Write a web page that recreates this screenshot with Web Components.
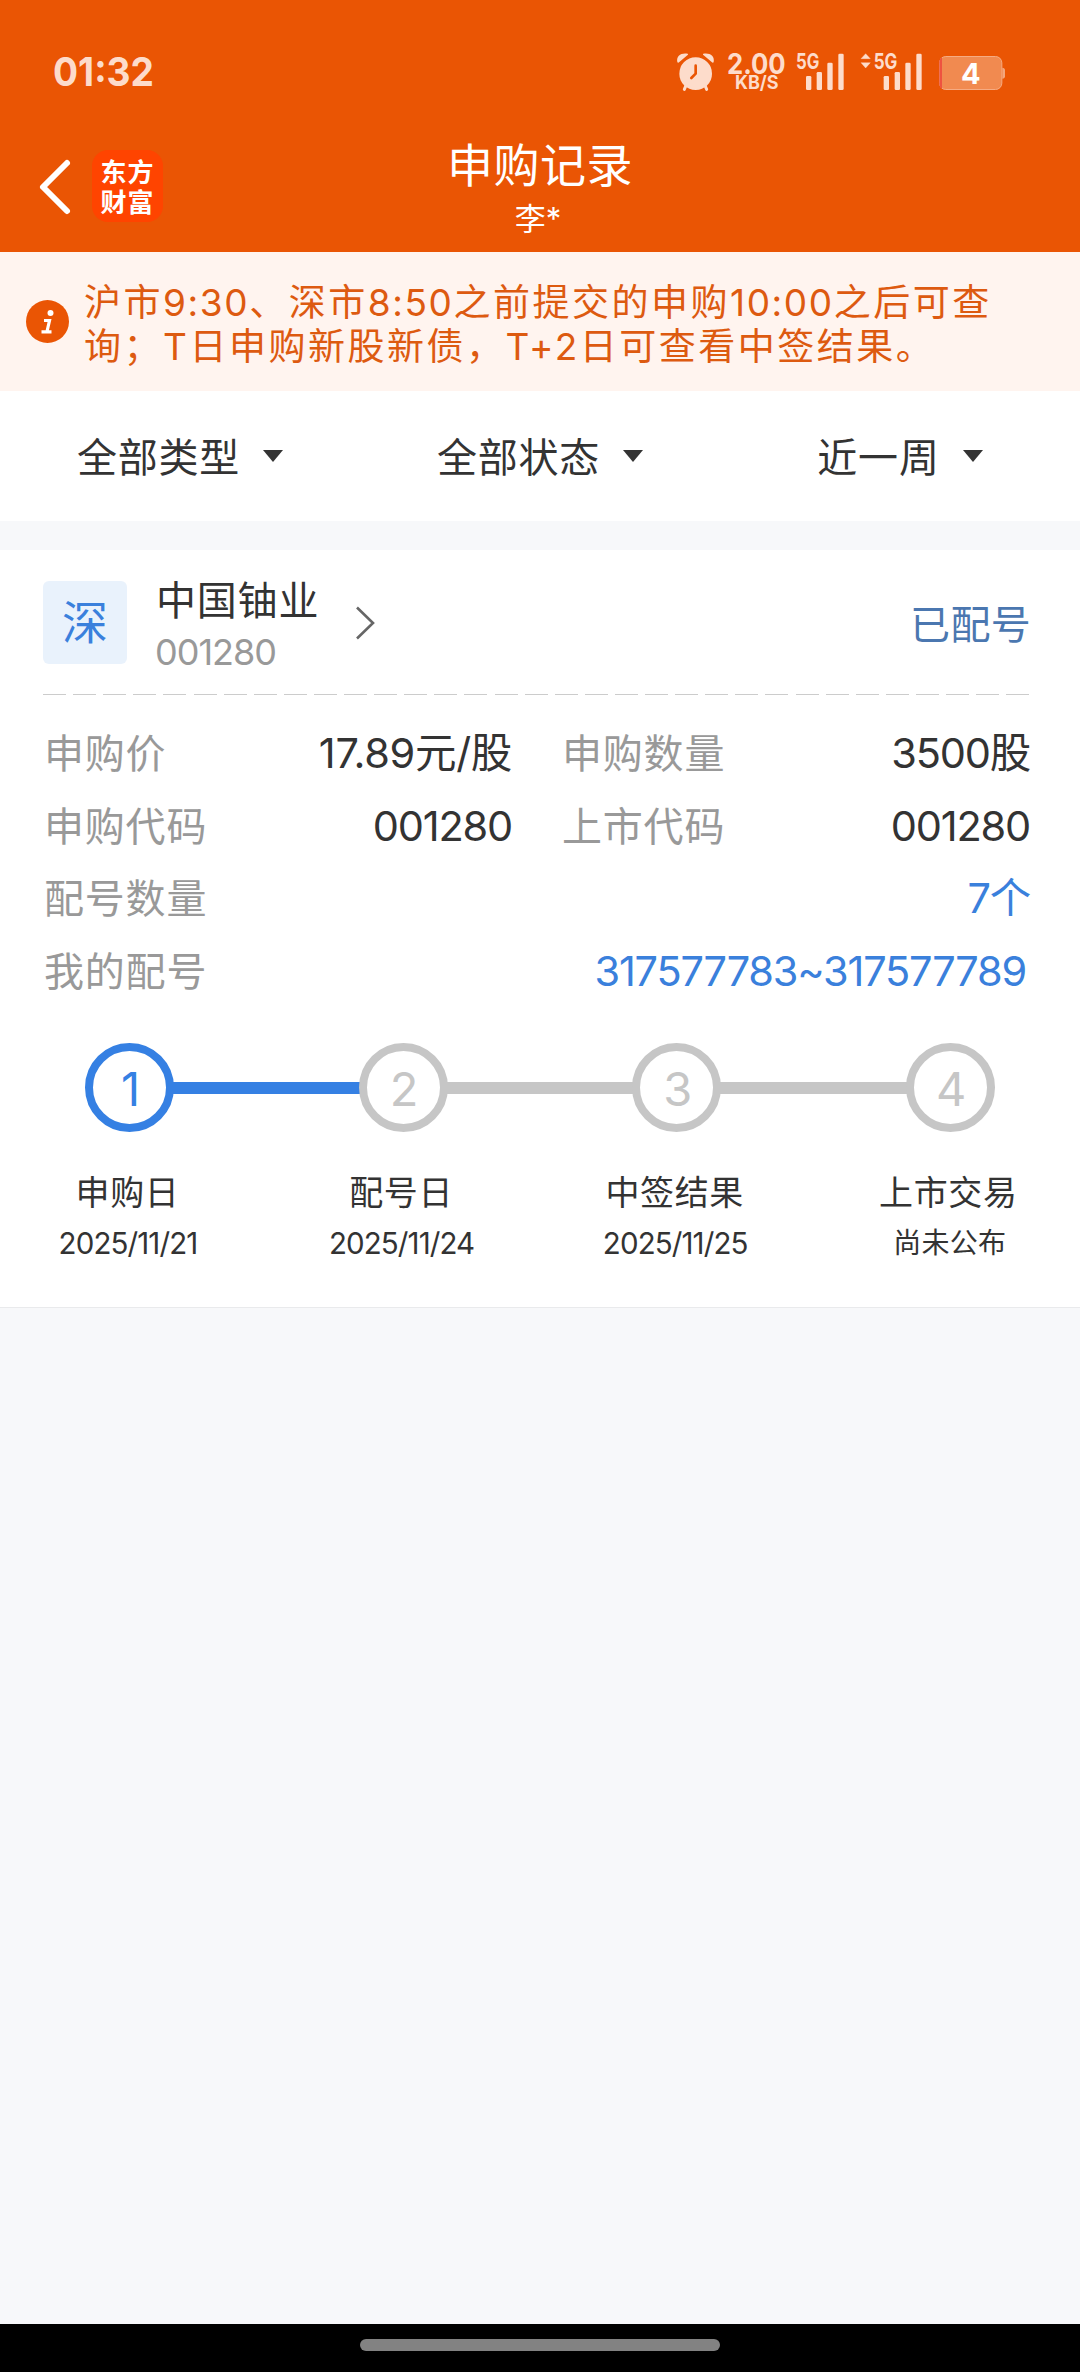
<!DOCTYPE html>
<html lang="zh-CN">
<head>
<meta charset="UTF-8">
<meta name="viewport" content="width=device-width, initial-scale=1.0">
<title>申购记录</title>
<style>
    * { box-sizing: border-box; }
    body {
        margin: 0;
        background: #f7f8fa;
        color: #333;
        font-family: Inter, "Noto Sans CJK SC", sans-serif;
    }
    .num { letter-spacing: 1.6px; }
    .price { letter-spacing: -0.3px; }
</style>
</head>
<body>
<record-page>
    <status-bar slot="top" time="01:32"></status-bar>
    <title-bar slot="top" heading="申购记录" user="李*"></title-bar>
    <notice-bar>沪市<span class="num">9:30</span>、深市<span class="num">8:50</span>之前提交的申购<span class="num">10:00</span>之后可查<br>询；T日申购新股新债，T+2日可查看中签结果。</notice-bar>
    <filter-bar>
        <filter-item>全部类型</filter-item>
        <filter-item>全部状态</filter-item>
        <filter-item>近一周</filter-item>
    </filter-bar>
    <record-card>
        <stock-header slot="header" market="深" name="中国铀业" code="001280" status="已配号"></stock-header>
        <info-row label="申购价"><span class="price">17.89元/股</span></info-row>
        <info-row label="申购数量">3500股</info-row>
        <info-row label="申购代码">001280</info-row>
        <info-row label="上市代码">001280</info-row>
        <info-row label="配号数量" wide>7个</info-row>
        <info-row label="我的配号" wide numbers>317577783~317577789</info-row>
        <progress-step slot="steps" no="1" label="申购日" active>2025/11/21</progress-step>
        <progress-step slot="steps" no="2" label="配号日">2025/11/24</progress-step>
        <progress-step slot="steps" no="3" label="中签结果">2025/11/25</progress-step>
        <progress-step slot="steps" no="4" label="上市交易" last>尚未公布</progress-step>
    </record-card>
    <home-indicator slot="bottom"></home-indicator>
</record-page>

<script>
class RecordPage extends HTMLElement {
    connectedCallback() {
        this.attachShadow({ mode: 'open' });
        this.shadowRoot.innerHTML = `
            <style>
                :host { display: flex; flex-direction: column; width: 1080px; height: 2372px; }
                header { height: 252px; background: #ea5504; color: white; }
                main { flex: 1; }
            </style>
            <header><slot name="top"></slot></header>
            <main><slot></slot></main>
            <slot name="bottom"></slot>
        `;
    }
}

class StatusBar extends HTMLElement {
    connectedCallback() {
        this.attachShadow({ mode: 'open' });
        this.shadowRoot.innerHTML = `
            <style>
                :host {
                    display: flex;
                    box-sizing: border-box;
                    justify-content: space-between;
                    height: 120px;
                    padding: 30px 0 0 54px;
                    color: #fddccb;
                }
                svg { display: block; }
                text { font-family: Inter, sans-serif; font-weight: 700; fill: currentColor; }
            </style>
            <svg width="110" height="80" viewBox="0 0 110 80">
                <text x="-1" y="55.5" font-size="40" textLength="101" lengthAdjust="spacingAndGlyphs">${this.getAttribute('time')}</text>
            </svg>
            <svg width="440" height="90" viewBox="0 0 1320 270" fill="currentColor">
                <!-- alarm clock -->
                <circle cx="167" cy="131" r="49"/>
                <path d="M112 96C108 78 124 67 143 71C145 72 144 75 142 76L118 96C116 98 113 99 112 96Z"/>
                <path d="M221 96C225 78 209 67 190 71C188 72 189 75 191 76L215 96C217 98 220 99 221 96Z"/>
                <path d="M138 166L133 178M195 166L200 178" stroke="currentColor" stroke-width="9" stroke-linecap="round"/>
                <path d="M167 107V131L154 144" fill="none" stroke="#ea5504" stroke-width="8" stroke-linecap="round" stroke-linejoin="round"/>
                <!-- network speed -->
                <text x="261" y="131" font-size="84" textLength="176" lengthAdjust="spacingAndGlyphs">2.00</text>
                <text x="285" y="178" font-size="55" textLength="131" lengthAdjust="spacingAndGlyphs">KB/S</text>
                <!-- first sim -->
                <text x="468" y="116" font-size="64" textLength="70" lengthAdjust="spacingAndGlyphs">5G</text>
                <rect x="498" y="138" width="16" height="42" rx="4"/>
                <rect x="530" y="126" width="16" height="54" rx="4"/>
                <rect x="562" y="98" width="16" height="82" rx="4"/>
                <rect x="595" y="71" width="16" height="109" rx="4"/>
                <!-- second sim -->
                <path d="M663 86L677 71L691 86ZM663 98L677 114L691 98Z" stroke="currentColor" stroke-width="1" stroke-linejoin="round"/>
                <text x="701" y="116" font-size="64" textLength="71" lengthAdjust="spacingAndGlyphs">5G</text>
                <rect x="731" y="138" width="16" height="42" rx="4"/>
                <rect x="764" y="126" width="16" height="54" rx="4"/>
                <rect x="796" y="98" width="16" height="82" rx="4"/>
                <rect x="829" y="71" width="16" height="109" rx="4"/>
                <!-- battery -->
                <path d="M1087 113C1092 113 1095 116 1095 120V139C1095 143 1092 146 1087 146Z" fill="#f4a67c"/>
                <rect x="898.5" y="79.5" width="187" height="99" rx="19" fill="#f18a50" stroke="#f6ab82" stroke-width="3"/>
                <path d="M906 82V177C901 174 898 168 898 160V98C898 90 901 85 906 82Z" fill="#ee5340"/>
                <text x="963" y="163" font-size="87" textLength="59" lengthAdjust="spacingAndGlyphs" style="fill:#fff">4</text>
            </svg>
        `;
    }
}

class TitleBar extends HTMLElement {
    connectedCallback() {
        this.attachShadow({ mode: 'open' });
        this.shadowRoot.innerHTML = `
            <style>
                :host {
                    display: grid;
                    grid-template-columns: 1fr auto 1fr;
                    height: 132px;
                }
                .left { display: flex; align-items: flex-start; padding: 30px 0 0 37px; }
                .back { display: block; margin: 8px 19px 0 0; }
                .logo {
                    display: grid;
                    grid-template-columns: 27px 27px;
                    grid-auto-rows: 30px;
                    place-content: center;
                    width: 71px;
                    height: 72px;
                    border-radius: 16px;
                    background: #ff4400;
                    font: 700 26px/30px "Noto Sans CJK SC", sans-serif;
                }
                .center { text-align: center; padding-top: 14px; }
                h1 { margin: 0; font-weight: 400; font-size: 46px; line-height: 62px; letter-spacing: 0.5px; }
                p { margin: 3px 0 0; padding-right: 4px; font-size: 31px; line-height: 40px; }
            </style>
            <div class="left">
                <svg class="back" width="36" height="58" viewBox="0 0 36 58">
                    <path d="M30 5L6 29L30 53" fill="none" stroke="white" stroke-width="6" stroke-linecap="round" stroke-linejoin="round"/>
                </svg>
                <div class="logo"><span>东</span><span>方</span><span>财</span><span>富</span></div>
            </div>
            <div class="center">
                <h1>${this.getAttribute('heading')}</h1>
                <p>${this.getAttribute('user')}</p>
            </div>
        `;
    }
}

class NoticeBar extends HTMLElement {
    connectedCallback() {
        this.attachShadow({ mode: 'open' });
        this.shadowRoot.innerHTML = `
            <style>
                :host {
                    display: flex;
                    align-items: center;
                    height: 139px;
                    padding-left: 26px;
                    background: #fff4ef;
                    color: #dd5a10;
                }
                svg { flex: none; margin-right: 15px; }
                p { margin: 0; padding-top: 6px; font-size: 37px; line-height: 44px; letter-spacing: 2.5px; white-space: nowrap; }
            </style>
            <svg width="43" height="43" viewBox="0 0 43 43">
                <circle cx="21.5" cy="21.5" r="21.5" fill="#ea5504"/>
                <circle cx="24.5" cy="13" r="3" fill="#fff"/>
                <path d="M18 20.5H23.5L21 31.5M15.5 31.8H25.5" fill="none" stroke="#fff" stroke-width="3.2"/>
            </svg>
            <p><slot></slot></p>
        `;
    }
}

class FilterBar extends HTMLElement {
    connectedCallback() {
        this.attachShadow({ mode: 'open' });
        this.shadowRoot.innerHTML = `
            <style>
                :host {
                    display: grid;
                    grid-template-columns: repeat(3, 1fr);
                    height: 130px;
                    background: white;
                }
            </style>
            <slot></slot>
        `;
    }
}

class FilterItem extends HTMLElement {
    connectedCallback() {
        this.attachShadow({ mode: 'open' });
        this.shadowRoot.innerHTML = `
            <style>
                :host {
                    display: flex;
                    align-items: center;
                    justify-content: center;
                    font-size: 40px;
                    line-height: 60px;
                    letter-spacing: 0.8px;
                }
                span { padding-top: 4px; }
                i {
                    margin-left: 23px;
                    border: 10px solid transparent;
                    border-top: 12px solid #333;
                    border-bottom: 0;
                }
            </style>
            <span><slot></slot></span><i></i>
        `;
    }
}

class RecordCard extends HTMLElement {
    connectedCallback() {
        this.attachShadow({ mode: 'open' });
        this.shadowRoot.innerHTML = `
            <style>
                :host {
                    display: block;
                    box-sizing: border-box;
                    height: 758px;
                    margin-top: 29px;
                    background: white;
                    border-bottom: 1px solid #e9eaec;
                }
                .dash {
                    height: 1px;
                    margin: 0 51px 0 43px;
                    background: repeating-linear-gradient(90deg, #ccc 0 23px, transparent 23px 30.1px);
                }
                .info {
                    display: grid;
                    grid-template-columns: 1fr 1fr;
                    column-gap: 50px;
                    grid-auto-rows: 72.7px;
                    padding: 22px 50px 0 44px;
                }
                .steps { display: flex; gap: 184.6px; padding: 35px 0 0 85px; }
            </style>
            <slot name="header"></slot>
            <div class="dash"></div>
            <div class="info"><slot></slot></div>
            <div class="steps"><slot name="steps"></slot></div>
        `;
    }
}

class StockHeader extends HTMLElement {
    connectedCallback() {
        this.attachShadow({ mode: 'open' });
        this.shadowRoot.innerHTML = `
            <style>
                :host {
                    display: flex;
                    box-sizing: border-box;
                    height: 144px;
                    padding: 31px 49px 0 43px;
                }
                .market {
                    width: 84px;
                    height: 83px;
                    border-radius: 6px;
                    background: #e9f2fc;
                    color: #3a80dc;
                    font-size: 46px;
                    line-height: 83px;
                    text-align: center;
                }
                .stock { width: 164px; margin: -10px 0 0 29px; letter-spacing: 0.8px; white-space: nowrap; }
                .name { font-size: 40px; line-height: 60px; }
                .code { margin-left: -1px; font-size: 36px; line-height: 43px; letter-spacing: -1px; color: #999; }
                svg { margin: 24px 0 0 35px; }
                .status { margin-left: auto; color: #4b77b0; font-size: 40px; line-height: 87px; letter-spacing: 0.3px; }
            </style>
            <div class="market">${this.getAttribute('market')}</div>
            <div class="stock">
                <div class="name">${this.getAttribute('name')}</div>
                <div class="code">${this.getAttribute('code')}</div>
            </div>
            <svg width="22" height="36" viewBox="0 0 22 36">
                <path d="M2 2.5L18 18L2 33.5" fill="none" stroke="#666" stroke-width="2.6"/>
            </svg>
            <div class="status">${this.getAttribute('status')}</div>
        `;
    }
}

class InfoRow extends HTMLElement {
    connectedCallback() {
        this.attachShadow({ mode: 'open' });
        this.shadowRoot.innerHTML = `
            <style>
                :host {
                    display: flex;
                    justify-content: space-between;
                    font-size: 40px;
                    line-height: 73px;
                }
                :host([wide]) { grid-column: 1 / -1; }
                :host([wide]) .value { color: #3a80dc; }
                :host([numbers]) .value { padding-right: 4px; }
                .label { color: #999; letter-spacing: 0.8px; }
                .value { font-size: 41.5px; letter-spacing: -1.2px; }
            </style>
            <span class="label">${this.getAttribute('label')}</span>
            <span class="value"><slot></slot></span>
        `;
    }
}

class ProgressStep extends HTMLElement {
    connectedCallback() {
        this.attachShadow({ mode: 'open' });
        this.shadowRoot.innerHTML = `
            <style>
                :host {
                    --tone: #c6c6c6;
                    display: flex;
                    flex-direction: column;
                    align-items: center;
                    flex: none;
                    width: 89px;
                    white-space: nowrap;
                }
                :host([active]) { --tone: #3580e3; }
                .track { display: flex; align-items: center; align-self: stretch; margin-right: -184.6px; }
                .dot {
                    flex: none;
                    box-sizing: border-box;
                    width: 89px;
                    height: 89px;
                    padding-left: 2px;
                    border: 8.5px solid var(--tone);
                    border-radius: 50%;
                    color: var(--tone);
                    font-size: 47px;
                    font-weight: 400;
                    line-height: 76px;
                    text-align: center;
                }
                .line { flex: 1; height: 12px; margin: 2px -1px 0; background: var(--tone); }
                :host([last]) .track { margin-right: 0; }
                :host([last]) .line { display: none; }
                .label { margin-top: 36px; padding-right: 4px; font-size: 34px; line-height: 50px; letter-spacing: 0.6px; }
                .date { padding-right: 3px; font-size: 29.5px; line-height: 50px; letter-spacing: -0.9px; }
                :host([last]) .date { font-size: 28px; padding-right: 1px; letter-spacing: 0.3px; }
            </style>
            <div class="track"><div class="dot">${this.getAttribute('no')}</div><div class="line"></div></div>
            <div class="label">${this.getAttribute('label')}</div>
            <div class="date"><slot></slot></div>
        `;
    }
}

class HomeIndicator extends HTMLElement {
    connectedCallback() {
        this.attachShadow({ mode: 'open' });
        this.shadowRoot.innerHTML = `
            <style>
                :host { display: block; box-sizing: border-box; height: 48px; padding-top: 15px; background: black; }
                div { width: 360px; height: 12px; margin: 0 auto; border-radius: 6px; background: #828282; }
            </style>
            <div></div>
        `;
    }
}

customElements.define('record-page', RecordPage);
customElements.define('status-bar', StatusBar);
customElements.define('title-bar', TitleBar);
customElements.define('notice-bar', NoticeBar);
customElements.define('filter-bar', FilterBar);
customElements.define('filter-item', FilterItem);
customElements.define('record-card', RecordCard);
customElements.define('stock-header', StockHeader);
customElements.define('info-row', InfoRow);
customElements.define('progress-step', ProgressStep);
customElements.define('home-indicator', HomeIndicator);
</script>
</body>
</html>
